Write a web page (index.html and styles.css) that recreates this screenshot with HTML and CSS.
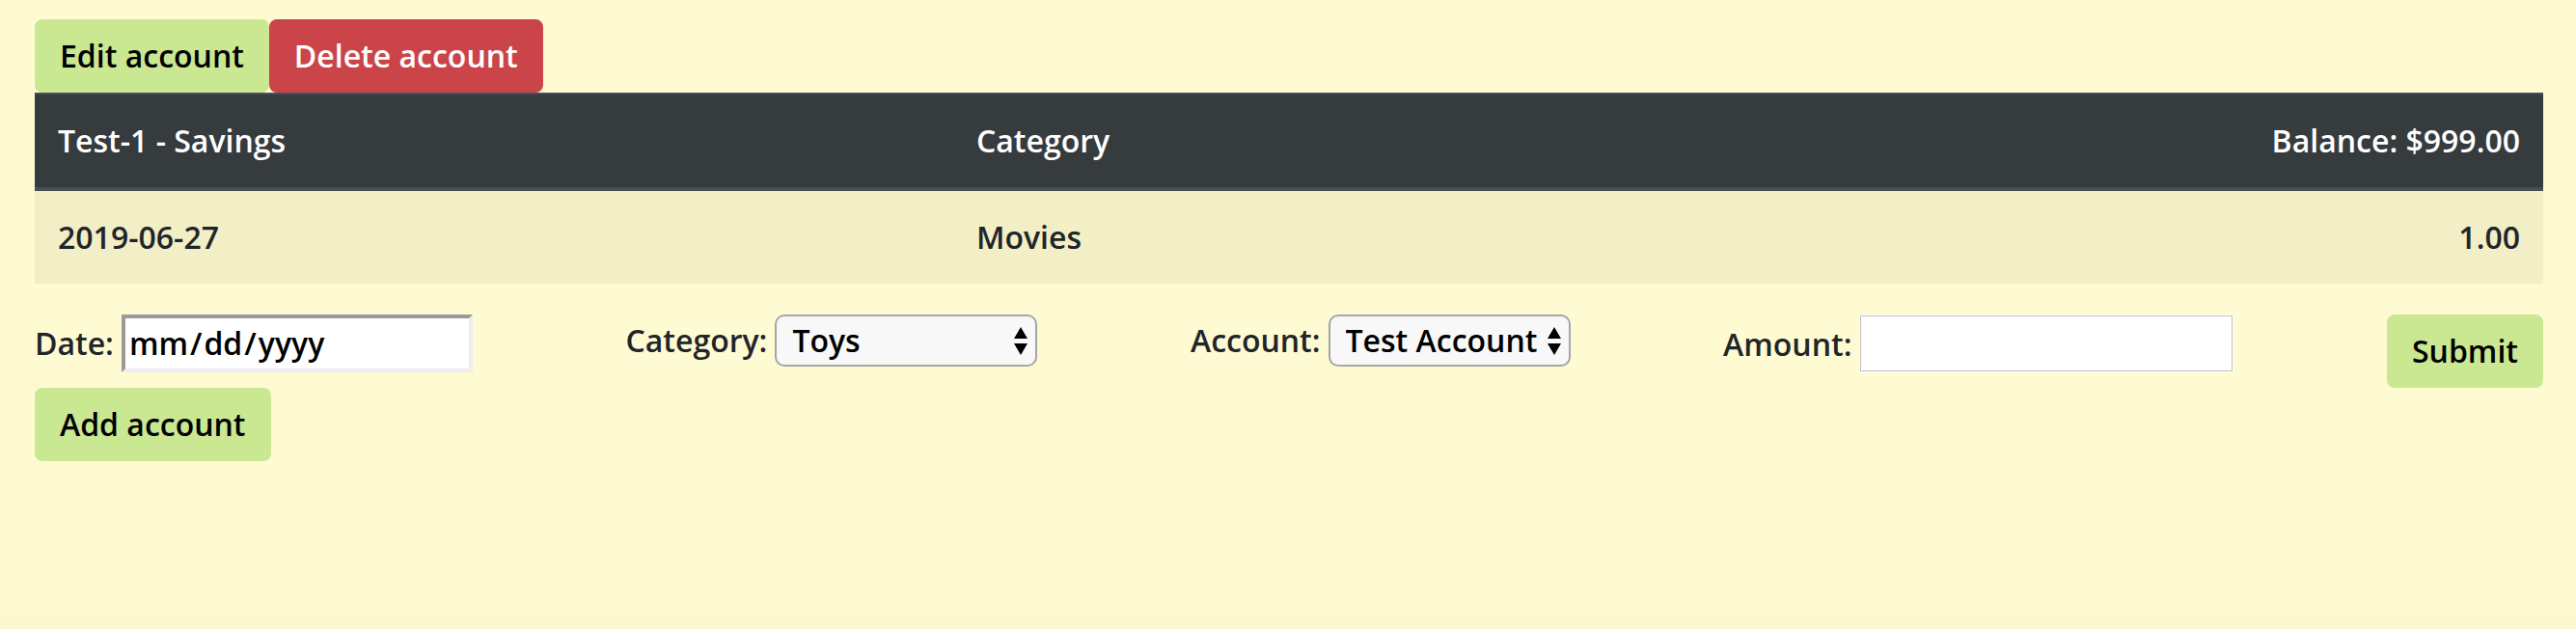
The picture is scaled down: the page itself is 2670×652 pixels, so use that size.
FILE: index.html
```html
<!DOCTYPE html>
<html lang="en-US">
<head>
<meta charset="utf-8">
<title>Accounts</title>
<link rel="stylesheet" href="styles.css">
</head>
<body>
<main class="page">
  <div class="actions">
    <button type="button" class="btn btn-primary">Edit account</button>
    <button type="button" class="btn btn-danger">Delete account</button>
  </div>
  <table class="ledger">
    <thead>
      <tr>
        <th scope="col" class="col-name">Test-1 - Savings</th>
        <th scope="col">Category</th>
        <th scope="col" class="amount">Balance: $999.00</th>
      </tr>
    </thead>
    <tbody>
      <tr>
        <td>2019-06-27</td>
        <td>Movies</td>
        <td class="amount">1.00</td>
      </tr>
    </tbody>
  </table>
  <form class="entry">
    <div class="field">
      <label for="date">Date:</label>
      <input id="date" class="date-input" type="date">
    </div>
    <div class="field">
      <label for="category">Category:</label>
      <select id="category" class="select select-category">
        <option>Toys</option>
        <option>Movies</option>
      </select>
    </div>
    <div class="field">
      <label for="account">Account:</label>
      <select id="account" class="select">
        <option>Test Account</option>
      </select>
    </div>
    <div class="field">
      <label for="amount">Amount:</label>
      <input id="amount" class="amount-input" type="text">
    </div>
    <button type="submit" class="btn btn-primary">Submit</button>
  </form>
  <button type="button" class="btn btn-primary">Add account</button>
</main>
</body>
</html>
```

FILE: styles.css
```css
*,
*::before,
*::after {
  box-sizing: border-box;
}

html {
  min-height: 100%;
  background: #fefad1 linear-gradient(to top, #fbf7cd, #fefad1) bottom / 100% 28px no-repeat;
}

body {
  margin: 0;
  color: #212529;
  font-family: "Open Sans", sans-serif;
  font-size: 32px;
  font-weight: 600;
  line-height: 48px;
}

.page {
  padding: 20px 34px 20px 36px;
}

.actions {
  display: flex;
}

.btn {
  padding: 12px 24px;
  border: 2px solid transparent;
  border-radius: 8px;
  font: inherit;
  color: #000;
}

.btn-primary {
  background: #cae792;
  border-color: #cae792;
}

.btn-danger {
  background: #cb444a;
  border-color: #cb444a;
  color: #fff;
}

.ledger {
  width: 100%;
  margin-bottom: 32px;
  border-collapse: separate;
  border-spacing: 0;
}

.ledger th,
.ledger td {
  padding: 24px;
  text-align: left;
  font-weight: 600;
}

.ledger th {
  background: #363b3e;
  color: #fff;
  border-top: 2px solid #484d56;
  border-bottom: 4px solid #484d56;
}

.ledger td {
  background: #f2eec6;
}

.ledger .amount {
  text-align: right;
}

.ledger .col-name {
  width: 952px;
}

.entry {
  display: flex;
  justify-content: space-between;
  align-items: flex-start;
}

.field {
  display: flex;
  align-items: baseline;
  gap: 8px;
}

.date-input {
  width: 364px;
  height: 60px;
  padding: 2px 3px;
  border: 4px solid;
  border-color: #9a9a9a #eee #eee #9a9a9a;
  border-radius: 0;
  background: #fff;
  color: #000;
  font: inherit;
}

.date-input::-webkit-datetime-edit-text {
  padding: 0 1px;
}

.date-input::-webkit-calendar-picker-indicator {
  display: none;
}

.select {
  appearance: none;
  height: 54px;
  padding: 0 32px 0 16px;
  border: 2px solid #a6a6a9;
  border-radius: 10px;
  background: #f8f8f8 url("data:image/svg+xml,%3Csvg xmlns='http://www.w3.org/2000/svg' width='14' height='29'%3E%3Cpath d='M7 0L14 12H0zM0 17H14L7 29z'/%3E%3C/svg%3E") right 8px center no-repeat;
  color: #000;
  font: inherit;
}

.select-category {
  width: 272px;
}

.amount-input {
  width: 388px;
  height: 60px;
  padding: 2px;
  border: 1px solid #fff;
  outline: 1px solid #bfbfbf;
  outline-offset: -2px;
  background: #fff;
  color: #000;
  font: inherit;
}
```
